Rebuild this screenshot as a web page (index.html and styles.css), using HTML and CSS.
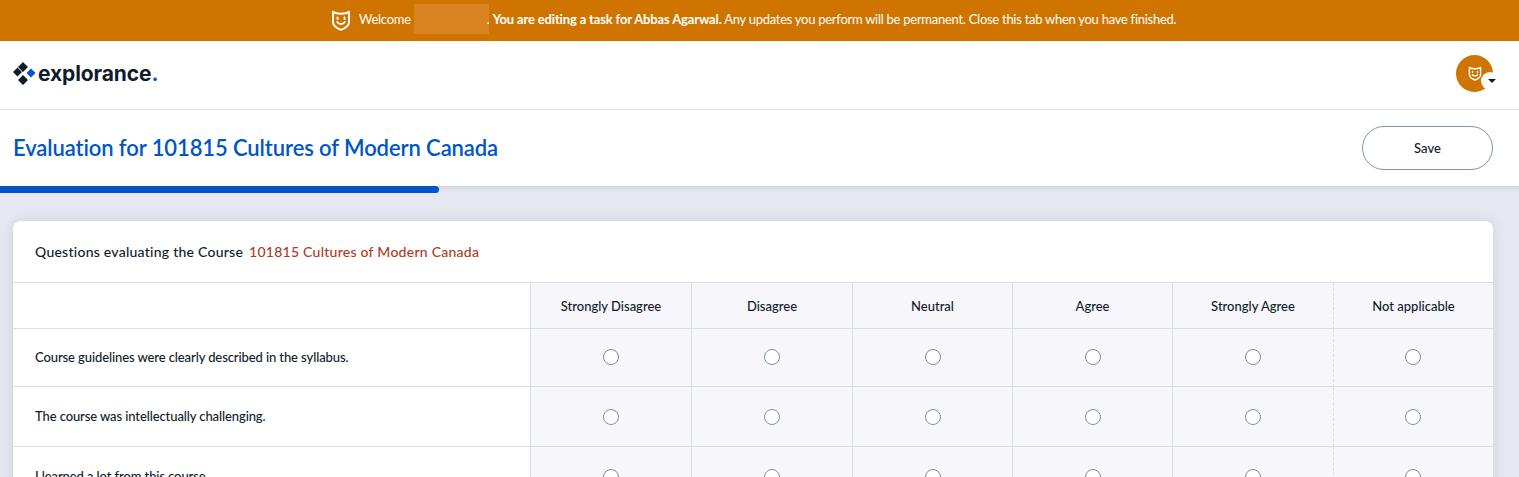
FILE: index.html
```html
<!DOCTYPE html>
<html lang="en">
<head>
<meta charset="utf-8">
<title>Evaluation</title>
<link rel="stylesheet" href="styles.css">
</head>
<body>
<div class="banner">
  <svg class="mask" width="20" height="21" viewBox="0 0 20 21" fill="none" stroke="#fff" stroke-width="1.900"><path d="M2 1.800c2 1.500 3.600 2 8 2s6-.5 8-2V12c0 3.500-3.600 6.200-8 7.800-4.400-1.600-8-4.300-8-7.800z" stroke-linejoin="round"/><path d="M6.500 7.500v1.500M13.500 7.500v1.500M6.200 12c1.800 2.600 5.800 2.600 7.600 0" stroke-linecap="round"/></svg>
  <span class="welcome">Welcome</span>
  <span class="redacted"></span>
  <span class="msg">. <b>You are editing a task for Abbas Agarwal.</b> Any updates you perform will be permanent. Close this tab when you have finished.</span>
</div>
<header class="top">
  <div class="logo">
    <svg width="24" height="24" viewBox="0 0 24 24"><path fill="#101c2c" d="M10 0l5 5-5 5-5-5zM4.500 5.500l4.500 4.500-4.500 4.500L0 10zM10 13l5 5-5 5-5-5z"/><path fill="#0056c5" d="M18 6.500l4.500 4.500-4.500 4.500-4.500-4.500z"/></svg>
    <span class="wordmark">explorance<span class="period">.</span></span>
  </div>
  <div class="avatar">
    <svg width="14" height="15" viewBox="0 0 20 21" fill="none" stroke="#fff" stroke-width="2"><path d="M2 1.800c2 1.500 3.600 2 8 2s6-.5 8-2V12c0 3.500-3.600 6.200-8 7.800-4.400-1.600-8-4.300-8-7.800z" stroke-linejoin="round"/><path d="M6.500 7.500v1.500M13.500 7.500v1.500M6.200 12c1.800 2.600 5.800 2.600 7.600 0" stroke-linecap="round"/></svg>
    <span class="caret-wrap"><span class="caret"></span></span>
  </div>
</header>
<section class="title-row">
  <h1>Evaluation for 101815 Cultures of Modern Canada</h1>
  <button class="save">Save</button>
</section>
<div class="progress"><div class="bar"></div></div>
<main class="content">
  <div class="card">
    <div class="card-head">Questions evaluating the Course <span class="course">101815 Cultures of Modern Canada</span></div>
    <div class="matrix">
      <div class="q head"></div>
      <div class="c head">Strongly Disagree</div>
      <div class="c head">Disagree</div>
      <div class="c head">Neutral</div>
      <div class="c head">Agree</div>
      <div class="c head">Strongly Agree</div>
      <div class="c head na">Not applicable</div>

      <div class="q r1">Course guidelines were clearly described in the syllabus.</div>
      <div class="c r1"><i class="radio"></i></div>
      <div class="c r1"><i class="radio"></i></div>
      <div class="c r1"><i class="radio"></i></div>
      <div class="c r1"><i class="radio"></i></div>
      <div class="c r1"><i class="radio"></i></div>
      <div class="c r1 na"><i class="radio"></i></div>

      <div class="q r2">The course was intellectually challenging.</div>
      <div class="c r2"><i class="radio"></i></div>
      <div class="c r2"><i class="radio"></i></div>
      <div class="c r2"><i class="radio"></i></div>
      <div class="c r2"><i class="radio"></i></div>
      <div class="c r2"><i class="radio"></i></div>
      <div class="c r2 na"><i class="radio"></i></div>

      <div class="q r2">I learned a lot from this course.</div>
      <div class="c r2"><i class="radio"></i></div>
      <div class="c r2"><i class="radio"></i></div>
      <div class="c r2"><i class="radio"></i></div>
      <div class="c r2"><i class="radio"></i></div>
      <div class="c r2"><i class="radio"></i></div>
      <div class="c r2 na"><i class="radio"></i></div>
    </div>
  </div>
</main>
</body>
</html>
```
FILE: styles.css
```css
* { box-sizing: border-box; }
html, body { margin: 0; padding: 0; height: 477px; overflow: hidden; }
body { background: #e6e7f0; font-family: Lato, "Liberation Sans", sans-serif; color: #101c2c; font-size: 14px; }

.banner { height: 41px; background: #d07400; color: #fff; display: flex; align-items: center; padding: 0 0 4px 331px; font-size: 13px; letter-spacing: -.27px; white-space: nowrap; }
.mask { flex: none; margin: 4px 8px 0 0; }
.welcome { margin-right: 3px; }
.redacted { width: 75px; height: 30px; background: #d88422; flex: none; }
.msg { white-space: pre-wrap; margin-left: -2px; }
.banner b { font-weight: 700; letter-spacing: -.15px; }

.top { height: 69px; background: #fff; border-bottom: 1px solid #dde5f0; display: flex; align-items: center; justify-content: space-between; padding: 0 26px 3px 13px; }
.logo { display: flex; align-items: center; gap: 1px; }
.wordmark { font-family: Inter, sans-serif; font-weight: 700; font-size: 21px; letter-spacing: -.1px; color: #101c2c; }
.period { color: #0056c5; }

.avatar { position: relative; width: 37px; height: 37px; border-radius: 50%; background: #d07400; display: flex; align-items: center; justify-content: center; }
.caret-wrap { position: absolute; right: -6px; bottom: 2px; width: 18px; height: 18px; border-radius: 50%; background: #fff; display: flex; align-items: center; justify-content: center; }
.caret { width: 0; height: 0; margin-left: 3px; border-left: 4px solid transparent; border-right: 4px solid transparent; border-top: 4px solid #101c2c; }

.title-row { height: 76px; background: #fff; display: flex; align-items: center; justify-content: space-between; padding: 0 26px 0 13px; }
h1 { margin: 0 0 2px; font-size: 22px; font-weight: 600; letter-spacing: -.1px; color: #0056c5; }
.save { width: 131px; height: 44px; border: 1px solid #8096b0; border-radius: 22px; background: #fff; font: 500 13px Lato, sans-serif; color: #101c2c; }

.progress { height: 7px; box-shadow: inset 0 6px 6px -6px rgba(60, 70, 90, .2); }
.bar { width: 439px; height: 7px; background: #0056c5; border-radius: 0 4px 4px 0; }

.content { padding: 28px 26px 0 13px; }
.card { background: #fff; border-radius: 8px 8px 0 0; box-shadow: 0 0 12px rgba(50, 60, 80, .13); }
.card-head { height: 62px; display: flex; align-items: center; gap: 6px; padding-left: 22px; padding-bottom: 1px; border-bottom: 1px solid #d5deea; font-size: 14px; font-weight: 500; letter-spacing: .25px; }
.course { color: #b03a1c; }

.matrix { display: grid; grid-template-columns: 518px 161px 161px 160px 160px 161px 159px; grid-auto-rows: min-content; font-size: 13px; font-weight: 500; }
.q { padding-left: 22px; display: flex; align-items: center; border-bottom: 1px solid #d5deea; border-right: 1px solid #d5deea; padding-bottom: 1px; letter-spacing: -.1px; }
.c { background: #f6f6fb; display: flex; align-items: center; justify-content: center; border-bottom: 1px solid #d5deea; border-right: 1px solid #d5deea; }
.head { height: 46px; }
.r1 { height: 58px; }
.r2 { height: 60px; }
.c.na { border-right: 0; }
.c:has(+ .na) { border-right: 1px dashed #d5deea; }
.radio { display: block; width: 16px; height: 16px; border: 1px solid #7f90a6; border-radius: 50%; background: #fff; margin-bottom: 1px; }
.r2 .radio { margin: 1px 0 0; }
.na .radio { margin-right: 1px; }
```
